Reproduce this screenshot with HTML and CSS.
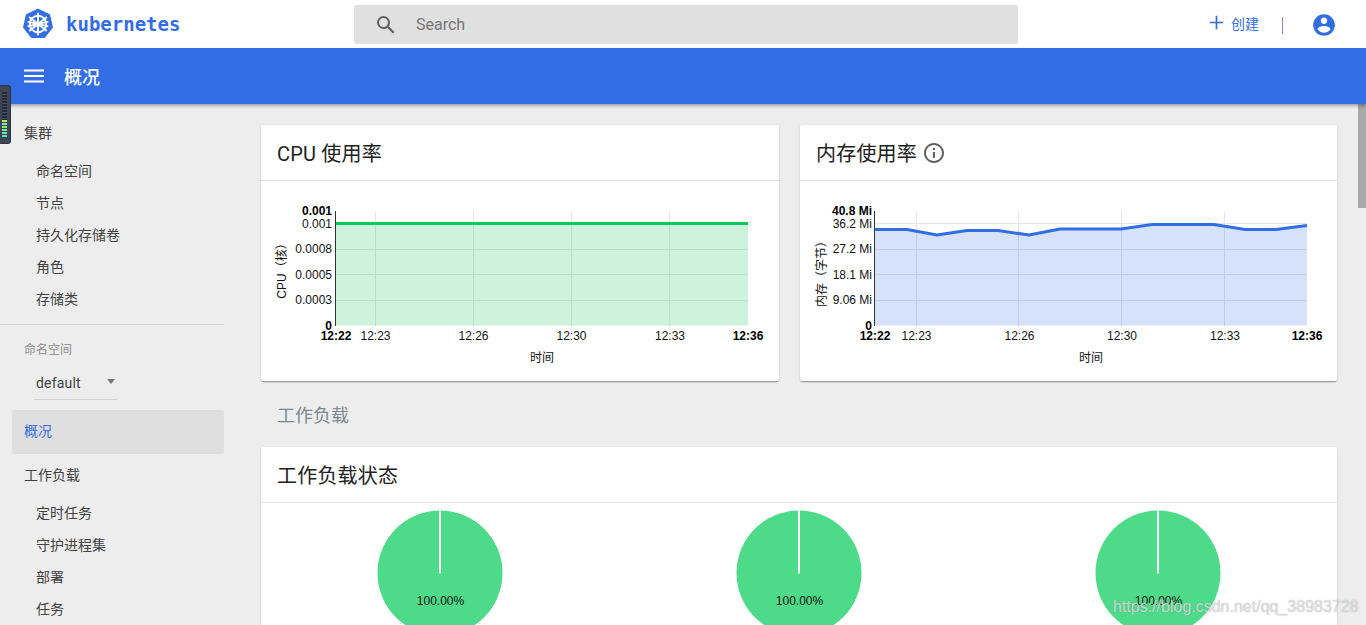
FILE: index.html
```html
<!DOCTYPE html>
<html lang="zh">
<head>
<meta charset="utf-8">
<title>概况 - Kubernetes Dashboard</title>
<link rel="stylesheet" href="styles.css">
</head>
<body>
<div class="page">
  <header class="toolbar">
    <div class="brand">
      <svg class="logo" viewBox="0 0 32 32" aria-hidden="true">
        <path class="logo-hept" d="M16 1.5 27.4 7 30.2 19.3 22.3 29.2H9.7L1.8 19.3 4.6 7Z"/>
        <g class="logo-wheel">
          <circle cx="16" cy="16" r="8.200"/>
          <circle cx="16" cy="16" r="1.600"/>
          <path d="M16 4.800V27.200M7.200 9 24.800 23M24.800 9 7.200 23M5.600 18.400 26.400 13.600M26.400 18.400 5.600 13.600"/>
        </g>
      </svg>
      <span class="wordmark">kubernetes</span>
    </div>
    <div class="search">
      <svg class="search-icon" viewBox="0 0 24 24" aria-hidden="true"><path d="M15.5 14h-.79l-.28-.27A6.47 6.47 0 0 0 16 9.5 6.5 6.5 0 1 0 9.5 16c1.61 0 3.09-.59 4.23-1.57l.27.28v.79l5 4.99L20.49 19l-4.99-5zm-6 0C7.01 14 5 11.99 5 9.5S7.01 5 9.5 5 14 7.01 14 9.5 11.99 14 9.5 14z"/></svg>
      <span class="search-text">Search</span>
    </div>
    <div class="actions">
      <button class="create">
        <svg class="plus" viewBox="0 0 16 16" aria-hidden="true"><path d="M8 .8v14.400M.8 8h14.400"/></svg>
        <span>创建</span>
      </button>
      <span class="vr"></span>
      <svg class="account" viewBox="0 0 24 24" aria-hidden="true"><path d="M12 2C6.48 2 2 6.48 2 12s4.48 10 10 10 10-4.48 10-10S17.52 2 12 2zm0 3c1.66 0 3 1.34 3 3s-1.34 3-3 3-3-1.34-3-3 1.34-3 3-3zm0 14.2a7.2 7.2 0 0 1-6-3.22c.03-1.99 4-3.08 6-3.08 1.99 0 5.97 1.09 6 3.08a7.2 7.2 0 0 1-6 3.22z"/></svg>
    </div>
  </header>

  <div class="titlebar">
    <svg class="menu" viewBox="0 0 20 14" aria-hidden="true"><path d="M0 1.5h20M0 7h20M0 12.500h20"/></svg>
    <h1>概况</h1>
  </div>

  <div class="body">
    <nav class="sidebar">
      <div class="nav-head">集群</div>
      <a class="nav-item">命名空间</a>
      <a class="nav-item">节点</a>
      <a class="nav-item">持久化存储卷</a>
      <a class="nav-item">角色</a>
      <a class="nav-item">存储类</a>
      <div class="nav-rule"></div>
      <div class="ns-label">命名空间</div>
      <div class="ns-select"><span>default</span><i class="caret"></i></div>
      <div class="nav-active">概况</div>
      <div class="nav-head short">工作负载</div>
      <a class="nav-item">定时任务</a>
      <a class="nav-item">守护进程集</a>
      <a class="nav-item">部署</a>
      <a class="nav-item">任务</a>
    </nav>

    <main class="content">
      <div class="chart-row">
        <section class="card cpu-card">
          <h2 class="card-title">CPU 使用率</h2>
          <svg class="chart" viewBox="261 181 518 200" role="img" aria-label="CPU 使用率">
            <path class="grid" d="M375.500 211V326M473.500 211V326M571.500 211V326M669.500 211V326"/>
            <path class="cpu-fill" d="M336 223.500H748V325.500H336Z"/>
            <path class="grid-green" d="M336 249.500H748M336 274.500H748M336 300.500H748M375.500 224V326M473.500 224V326M571.500 224V326M669.500 224V326"/>
            <path class="cpu-line" d="M336 223.500H748"/>
            <path class="axis" d="M335.500 211V326"/>
            <g class="ylab">
              <text class="b" x="332" y="215">0.001</text>
              <text x="332" y="228">0.001</text>
              <text x="332" y="253">0.0008</text>
              <text x="332" y="279">0.0005</text>
              <text x="332" y="304">0.0003</text>
              <text class="b" x="332" y="330">0</text>
            </g>
            <g class="xlab">
              <text class="b" x="336" y="340">12:22</text>
              <text x="375.500" y="340">12:23</text>
              <text x="473.500" y="340">12:26</text>
              <text x="571.500" y="340">12:30</text>
              <text x="670" y="340">12:33</text>
              <text class="b" x="748" y="340">12:36</text>
              <text x="542" y="362">时间</text>
            </g>
            <text class="ytitle" transform="translate(285.500 268) rotate(-90)">CPU（核）</text>
          </svg>
        </section>

        <section class="card mem-card">
          <h2 class="card-title">内存使用率
            <svg class="info" viewBox="0 0 24 24" aria-hidden="true"><path d="M11 7h2v2h-2zm0 4h2v6h-2zm1-9C6.480 2 2 6.480 2 12s4.480 10 10 10 10-4.480 10-10S17.520 2 12 2zm0 18c-4.410 0-8-3.590-8-8s3.590-8 8-8 8 3.590 8 8-3.590 8-8 8z"/></svg>
          </h2>
          <svg class="chart" viewBox="800 181 537 200" role="img" aria-label="内存使用率">
            <path class="grid" d="M916.500 211V326M1018.500 211V326M1121.500 211V326M1224.500 211V326M875 223.500H1307"/>
            <path class="mem-fill" d="M875 229.500H907L937 235L967 230.500H998L1029 235L1060 229H1121L1152 224.500H1214L1245 229.500H1276L1307 225.500V325.500H875Z"/>
            <path class="grid-blue" d="M875 249.500H1307M875 274.500H1307M875 300.500H1307M916.500 230V326M1018.500 230V326M1121.500 229V326M1224.500 226V326"/>
            <path class="mem-line" d="M875 229.500H907L937 235L967 230.500H998L1029 235L1060 229H1121L1152 224.500H1214L1245 229.500H1276L1307 225.500"/>
            <path class="axis" d="M874.500 211V326"/>
            <g class="ylab">
              <text class="b" x="872" y="215">40.8 Mi</text>
              <text x="872" y="228">36.2 Mi</text>
              <text x="872" y="253">27.2 Mi</text>
              <text x="872" y="279">18.1 Mi</text>
              <text x="872" y="304">9.06 Mi</text>
              <text class="b" x="872" y="330">0</text>
            </g>
            <g class="xlab">
              <text class="b" x="875" y="340">12:22</text>
              <text x="916.500" y="340">12:23</text>
              <text x="1019.500" y="340">12:26</text>
              <text x="1122" y="340">12:30</text>
              <text x="1225" y="340">12:33</text>
              <text class="b" x="1307" y="340">12:36</text>
              <text x="1091" y="362">时间</text>
            </g>
            <text class="ytitle" transform="translate(825.500 271) rotate(-90)">内存（字节）</text>
          </svg>
        </section>
      </div>

      <h3 class="section-title">工作负载</h3>

      <section class="card status-card">
        <h2 class="card-title">工作负载状态</h2>
        <div class="pies">
          <svg class="pie" viewBox="0 0 126 126" role="img" aria-label="100.00%"><circle cx="63" cy="63" r="62.500"/><path d="M63 0V63.500"/><text x="63.500" y="95">100.00%</text></svg>
          <svg class="pie" viewBox="0 0 126 126" role="img" aria-label="100.00%"><circle cx="63" cy="63" r="62.500"/><path d="M63 0V63.500"/><text x="63.500" y="95">100.00%</text></svg>
          <svg class="pie" viewBox="0 0 126 126" role="img" aria-label="100.00%"><circle cx="63" cy="63" r="62.500"/><path d="M63 0V63.500"/><text x="63.500" y="95">100.00%</text></svg>
        </div>
      </section>
    </main>

    <div class="scrolltrack"><div class="scrollthumb"></div></div>
  </div>

  <div class="gadget"><div class="led-off"></div><div class="led-on"></div></div>
  <div class="watermark">https://blog.csdn.net/qq_38983728</div>
</div>
</body>
</html>
```
FILE: styles.css
```css
* { box-sizing: border-box; }
html, body { margin: 0; height: 100%; overflow: hidden; }
body {
  font-family: Roboto, "Noto Sans CJK SC", "Liberation Sans", sans-serif;
  color: #212121;
  background: #ededed;
}
.page { position: relative; width: 1366px; height: 625px; overflow: hidden; display: flex; flex-direction: column; }

/* top toolbar */
.toolbar { flex: none; height: 48px; background: #fff; display: flex; align-items: flex-start; }
.brand { width: 354px; height: 48px; padding-left: 22px; display: flex; align-items: center; gap: 12px; }
.logo { width: 32px; height: 32px; flex: none; }
.logo-hept { fill: #326de6; stroke: #326de6; stroke-width: 1.5; stroke-linejoin: round; }
.logo-wheel { fill: none; stroke: #fff; stroke-width: 1.9; }
.wordmark { font-family: "DejaVu Sans Mono", monospace; font-weight: 700; font-size: 19px; color: #326de6; }
.search { width: 664px; height: 39px; margin-top: 5px; background: #e0e0e0; border-radius: 2px; display: flex; align-items: center; padding-left: 20px; gap: 18px; }
.search-icon { width: 24px; height: 24px; fill: #616161; flex: none; }
.search-text { font-size: 16px; color: #757575; }
.actions { flex: 1; height: 48px; display: flex; align-items: center; padding-left: 191px; }
.create { border: 0; background: none; padding: 0; margin-top: -3px; display: flex; align-items: center; gap: 7px; color: #326de6; font: inherit; font-size: 14px; }
.plus { width: 15px; height: 15px; fill: none; stroke: #326de6; stroke-width: 1.8; }
.vr { width: 1px; height: 17px; background: #8f7fe8; margin: 2px 0 0 23px; }
.account { width: 26px; height: 26px; fill: #326de6; margin: 2px 0 0 28px; }

/* blue title bar */
.titlebar { flex: none; position: relative; z-index: 2; height: 56px; background: #326de6; display: flex; align-items: center; padding-left: 24px; box-shadow: 0 2px 3px rgba(0,0,0,.3); }
.menu { width: 20px; height: 14px; fill: none; stroke: #fff; stroke-width: 2; flex: none; }
.titlebar h1 { margin: 0 0 0 20px; font-size: 18px; font-weight: 500; color: #fff; }

/* main region */
.body { flex: 1; min-height: 0; display: flex; }
.sidebar { flex: none; width: 248px; padding-top: 7px; font-size: 14px; color: #424242; }
.nav-head { height: 44px; line-height: 44px; padding-left: 24px; width: 224px; }
.nav-head.short { height: 43px; line-height: 43px; }
.nav-item { display: block; height: 32px; line-height: 32px; padding-left: 36px; width: 224px; }
.nav-rule { width: 224px; height: 1px; background: #d4d4d4; margin-top: 9px; }
.ns-label { font-size: 12px; color: #8c8c8c; padding-left: 24px; line-height: 16px; margin-top: 17px; }
.ns-select { width: 83px; height: 33px; margin: 9px 0 10px 34px; padding: 0 0 0 2px; border-bottom: 1px solid #d0d0d0; display: flex; align-items: center; justify-content: space-between; font-size: 14px; letter-spacing: .2px; }
.caret { width: 0; height: 0; border: 4.500px solid transparent; border-top: 5px solid #757575; border-bottom: 0; margin: -3px 2px 0 0; }
.nav-active { width: 212px; height: 44px; line-height: 42px; margin-left: 12px; padding-left: 12px; background: #dedede; border-radius: 2px; color: #326de6; }

.content { flex: none; width: 1110px; padding: 21px 0 0 13px; }
.chart-row { display: flex; gap: 21px; }
.card { background: #fff; border-radius: 2px; box-shadow: 0 2px 1px -1px rgba(0,0,0,.2), 0 1px 1px 0 rgba(0,0,0,.14), 0 1px 3px 0 rgba(0,0,0,.12); }
.cpu-card { width: 518px; height: 256px; }
.mem-card { width: 537px; height: 256px; }
.card-title { margin: 0; height: 56px; padding-left: 16px; display: flex; align-items: center; gap: 5px; font-size: 20px; font-weight: 400; letter-spacing: .2px; color: #212121; border-bottom: 1px solid #e0e0e0; }
.info { width: 24px; height: 24px; fill: #616161; flex: none; }
.chart { display: block; width: 100%; height: 200px; }
.grid { fill: none; stroke: #e6e6e6; stroke-width: 1; }
.grid-green { fill: none; stroke: #b9dfc9; stroke-width: 1; }
.grid-blue { fill: none; stroke: #c1cde6; stroke-width: 1; }
.cpu-fill { fill: #cdf3dd; }
.cpu-line { fill: none; stroke: #0ac958; stroke-width: 3; }
.mem-fill { fill: #d6e2f9; }
.mem-line { fill: none; stroke: #326de6; stroke-width: 3; }
.axis { fill: none; stroke: #333; stroke-width: 1; }
.chart text { font-family: "Liberation Sans", "Noto Sans CJK SC", sans-serif; font-size: 12px; fill: #111; }
.chart text.b { font-weight: 700; fill: #000; }
.ylab text { text-anchor: end; }
.xlab text { text-anchor: middle; }
.chart .ytitle { text-anchor: middle; }

.section-title { margin: 0; height: 66px; padding: 23px 0 0 16px; font-size: 18px; line-height: 24px; font-weight: 400; color: #7b8a8e; }
.status-card { width: 1076px; height: 400px; }
.pies { display: grid; grid-template-columns: repeat(3, 1fr); justify-items: center; padding-top: 7px; }
.pie { width: 126px; height: 126px; display: block; overflow: visible; }
.pie circle { fill: #4dda89; }
.pie path { fill: none; stroke: #fff; stroke-width: 2; }
.pie text { font-family: "Liberation Sans", sans-serif; font-size: 12px; text-anchor: middle; fill: #111; }

.scrolltrack { flex: none; width: 8px; margin-left: auto; background: #ededed; }
.scrollthumb { height: 104px; background: #a8a8a8; }

/* overlays */
.gadget { position: absolute; z-index: 3; left: -2px; top: 85px; width: 13px; height: 59px; padding: 6px 3px 0 3px; background: #3e4556; border: 1px solid #2b3140; border-radius: 3px; display: flex; flex-direction: column; }
.led-off { height: 28px; background: repeating-linear-gradient(#262a34 0 2px, #4a505e 2px 3px); }
.led-on { height: 17px; background: repeating-linear-gradient(transparent 0 2px, #3e4556 2px 3px), linear-gradient(#b6e86a, #4be8b8); }
.watermark { position: absolute; z-index: 4; left: 1113px; top: 596px; font-family: "Liberation Sans", sans-serif; font-size: 16px; line-height: 21px; color: rgba(255,255,255,.62); text-shadow: 0 0 1px rgba(120,120,120,.75); white-space: nowrap; }
```
